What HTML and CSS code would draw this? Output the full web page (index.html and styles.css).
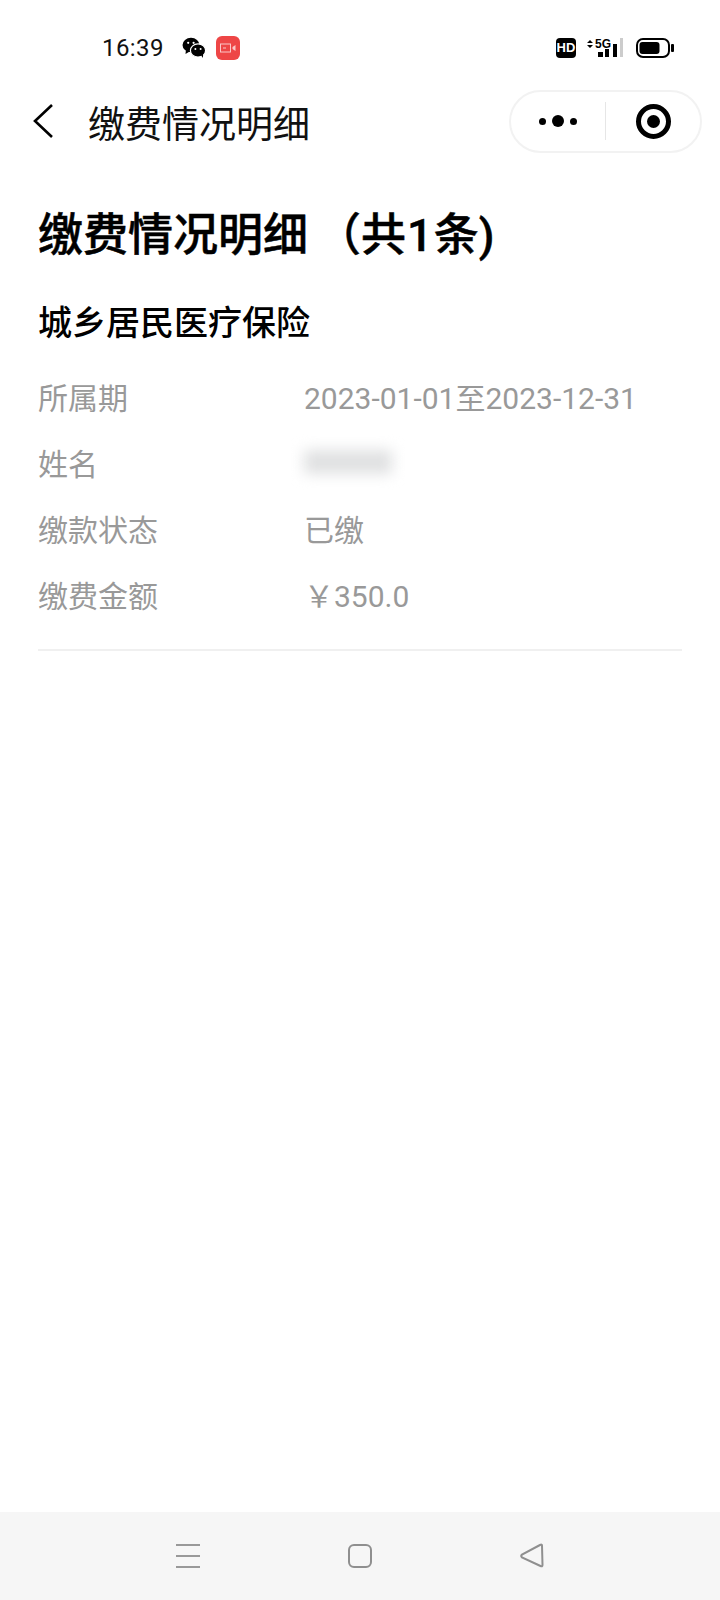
FILE: index.html
```html
<!DOCTYPE html>
<html lang="zh-CN">
<head>
    <meta charset="UTF-8">
    <meta name="viewport" content="width=device-width, initial-scale=1.0">
    <title>缴费情况明细</title>
    <link rel="stylesheet" href="styles.css">
</head>
<body>
    <div class="phone">
        <div class="status-bar">
            <div class="status-left">
                <span class="clock">16:39</span>
                <svg class="wechat" width="24" height="22" viewBox="0 0 24 22">
                    <ellipse cx="9" cy="8" rx="8.5" ry="7.2" fill="#000"/>
                    <path d="M4 12 L3.5 17 L8.5 14 Z" fill="#000"/>
                    <ellipse cx="16" cy="13.5" rx="7.6" ry="6.6" fill="#000" stroke="#fff" stroke-width="1.2"/>
                    <path d="M19 18 L21 21 L21 16 Z" fill="#000"/>
                    <circle cx="6.2" cy="5.8" r="1.1" fill="#fff"/>
                    <circle cx="11.6" cy="5.8" r="1.1" fill="#fff"/>
                    <circle cx="13.4" cy="12" r="1" fill="#fff"/>
                    <circle cx="18.6" cy="12" r="1" fill="#fff"/>
                </svg>
                <span class="rec-badge">
                    <svg width="16" height="10" viewBox="0 0 16 10">
                        <rect x="0.5" y="1" width="10" height="8" fill="none" stroke="#fff" stroke-opacity="0.7"/>
                        <path d="M3 5h3" stroke="#fff" stroke-opacity="0.7"/>
                        <path d="M12.5 4 L15.5 2 V8 L12.5 6 Z" fill="#fff" fill-opacity="0.7"/>
                    </svg>
                </span>
            </div>
            <div class="status-right">
                <span class="hd-badge">HD</span>
                <svg class="signal" width="38" height="24" viewBox="0 0 38 24">
                    <path d="M1 7 L4 4 L7 7 Z M1 9 L4 12 L7 9 Z" fill="#000"/>
                    <text x="9" y="12" class="signal-text">5G</text>
                    <rect x="12" y="16" width="5" height="5" fill="#000"/>
                    <rect x="19" y="13" width="4" height="8" fill="#000"/>
                    <rect x="27" y="8" width="4" height="13" fill="#000"/>
                    <rect x="34" y="2" width="3" height="19" fill="#ccc"/>
                </svg>
                <svg class="battery" width="38" height="20" viewBox="0 0 38 20">
                    <rect x="1" y="1" width="32" height="18" rx="6" fill="none" stroke="#000" stroke-width="2"/>
                    <rect x="3.500" y="4" width="20" height="12" rx="3" fill="#000"/>
                    <rect x="35" y="6" width="3" height="8" rx="1" fill="#000"/>
                </svg>
            </div>
        </div>

        <div class="nav-bar">
            <svg class="back" width="20" height="36" viewBox="0 0 20 36">
                <path d="M19 2 L2 18 L19 34" fill="none" stroke="#000" stroke-width="2.6"/>
            </svg>
            <div class="nav-title">缴费情况明细</div>
            <div class="capsule">
                <div class="capsule-part">
                    <span class="dot"></span>
                    <span class="dot dot-big"></span>
                    <span class="dot"></span>
                </div>
                <div class="capsule-line"></div>
                <div class="capsule-part">
                    <span class="target"><span class="target-inner"></span></span>
                </div>
            </div>
        </div>

        <div class="content">
            <h1>缴费情况明细<span class="paren">（</span>共<span class="num">1</span>条)</h1>
            <h2>城乡居民医疗保险</h2>
            <div class="row"><span class="label">所属期</span><span class="value">2023-01-01至2023-12-31</span></div>
            <div class="row"><span class="label">姓名</span><span class="value"><span class="blurred"></span></span></div>
            <div class="row"><span class="label">缴款状态</span><span class="value">已缴</span></div>
            <div class="row"><span class="label">缴费金额</span><span class="value">￥350.0</span></div>
            <div class="divider"></div>
        </div>

        <div class="bottom-bar">
            <svg width="26" height="26" viewBox="0 0 26 26">
                <path d="M1 2h24M1 13h24M1 24h24" stroke="#999" stroke-width="2"/>
            </svg>
            <svg width="26" height="26" viewBox="0 0 26 26">
                <rect x="2" y="2" width="22" height="22" rx="5" fill="none" stroke="#8f8f8f" stroke-width="2"/>
            </svg>
            <svg width="26" height="26" viewBox="0 0 26 26">
                <path d="M23 2.5 L23.500 22 Q23.500 24 21.500 23 L3 14.500 Q1.500 13 3 11.500 L21 2 Q23 1 23 2.500 Z" fill="none" stroke="#8f8f8f" stroke-width="2"/>
            </svg>
        </div>
    </div>
</body>
</html>
```

FILE: styles.css
```css
* {
    box-sizing: border-box;
}
body {
    margin: 0;
    background-color: #fff;
    font-family: Roboto, "Noto Sans CJK SC", sans-serif;
    color: #000;
}
.phone {
    width: 720px;
    height: 1600px;
    display: flex;
    flex-direction: column;
    overflow: hidden;
}

/* status bar */
.status-bar {
    height: 84px;
    padding: 12px 46px 0 102px;
    display: flex;
    align-items: center;
    justify-content: space-between;
}
.status-left {
    display: flex;
    align-items: center;
}
.clock {
    font-family: Roboto, sans-serif;
    font-size: 24px;
    letter-spacing: 0.4px;
    width: 80px;
    color: #111;
}
.rec-badge {
    width: 24px;
    height: 24px;
    margin-left: 10px;
    border-radius: 6px;
    background-color: #ee4646;
    display: flex;
    align-items: center;
    justify-content: center;
}
.status-right {
    display: flex;
    align-items: center;
}
.hd-badge {
    width: 20px;
    height: 20px;
    border-radius: 4px;
    background-color: #000;
    color: #fff;
    font-family: "Liberation Sans", sans-serif;
    font-size: 13px;
    font-weight: bold;
    line-height: 20px;
    text-align: center;
}
.signal {
    margin-left: 10px;
}
.signal-text {
    font-family: "Liberation Sans", sans-serif;
    font-size: 12px;
    font-weight: bold;
}
.battery {
    margin-left: 12px;
}

/* nav */
.nav-bar {
    height: 64px;
    margin-top: 5px;
    display: flex;
    align-items: center;
    padding: 0 18px 0 33px;
}
.back {
    flex-shrink: 0;
}
.nav-title {
    margin-left: 35px;
    padding-top: 2px;
    font-size: 37px;
    flex: 1;
    color: #111;
}
.capsule {
    width: 193px;
    height: 63px;
    border: 2px solid #f2f2f2;
    border-radius: 32px;
    display: flex;
    align-items: center;
}
.capsule-part {
    flex: 1;
    display: flex;
    align-items: center;
    justify-content: center;
    gap: 6px;
}
.capsule-line {
    width: 1px;
    height: 38px;
    background-color: #e6e6e6;
}
.dot {
    width: 7px;
    height: 7px;
    border-radius: 50%;
    background-color: #000;
}
.dot-big {
    width: 12px;
    height: 12px;
}
.target {
    width: 35px;
    height: 35px;
    border: 5px solid #000;
    border-radius: 50%;
    display: flex;
    align-items: center;
    justify-content: center;
}
.target-inner {
    width: 13px;
    height: 13px;
    border-radius: 50%;
    background-color: #000;
}

/* content */
.content {
    flex: 1;
    padding: 0 38px;
}
h1 {
    margin: 50px 0 0;
    font-size: 45px;
    line-height: 66px;
    font-weight: 500;
    -webkit-text-stroke: 0.5px #000;
}
.paren {
    margin-left: 8px;
}
.num {
    margin: 0 1px;
}
h2 {
    margin: 29px 0 0;
    font-size: 34px;
    line-height: 50px;
    font-weight: 500;
}
.row {
    display: flex;
    height: 66px;
    align-items: center;
    font-size: 30px;
    color: #999;
}
h2 + .row {
    margin-top: 15px;
}
.label {
    width: 266px;
}
.blurred {
    display: block;
    width: 88px;
    height: 24px;
    background-color: #e0e1e2;
    filter: blur(7px);
}
.divider {
    height: 2px;
    background-color: #f0f0f0;
    margin-top: 22px;
}

/* bottom buttons */
.bottom-bar {
    height: 88px;
    background-color: #f6f6f6;
    display: flex;
    align-items: center;
    justify-content: space-between;
    padding: 0 175px;
}
```
